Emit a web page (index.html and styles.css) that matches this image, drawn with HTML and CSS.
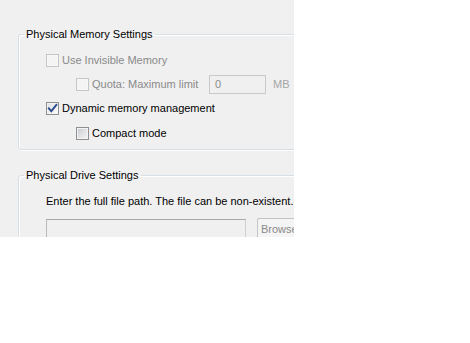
FILE: index.html
```html
<!DOCTYPE html>
<html>
<head>
<meta charset="utf-8">
<link rel="stylesheet" href="styles.css">
</head>
<body>
<div class="panel">
  <fieldset class="group group-memory">
    <legend>Physical Memory Settings</legend>
    <div class="row disabled">
      <span class="cb cb-disabled"></span>
      <span class="label">Use Invisible Memory</span>
    </div>
    <div class="row indent disabled">
      <span class="cb cb-disabled"></span>
      <span class="label quota-label">Quota: Maximum limit</span>
      <span class="num-input">0</span>
      <span class="unit">MB</span>
    </div>
    <div class="row">
      <span class="cb cb-on">
        <svg width="11" height="11" viewBox="0 0 11 11"><path d="M1.8 5.4 L4.3 8.2 L9.4 1.8" fill="none" stroke="#2d4b8e" stroke-width="1.9" stroke-linecap="square" stroke-linejoin="miter"/></svg>
      </span>
      <span class="label">Dynamic memory management</span>
    </div>
    <div class="row indent row-last">
      <span class="cb cb-on-off"></span>
      <span class="label">Compact mode</span>
    </div>
  </fieldset>
  <fieldset class="group group-drive">
    <legend>Physical Drive Settings</legend>
    <div class="hint">Enter the full file path. The file can be non-existent.</div>
    <div class="path-row">
      <span class="path-input"></span>
      <span class="browse">Browse...</span>
    </div>
  </fieldset>
</div>
</body>
</html>
```
FILE: styles.css
```css
html, body {
  margin: 0;
  padding: 0;
  background: #ffffff;
}
body {
  font-family: "Liberation Sans", Arial, sans-serif;
  font-size: 11px;
  color: #000;
}
.panel {
  width: 294px;
  height: 237px;
  background: #f0f0f0;
  overflow: hidden;
  box-sizing: border-box;
  padding: 27px 0 0 18px;
}
.group {
  margin: 0;
  width: 330px;
  box-sizing: border-box;
  border: 1px solid #d5dfe5;
  border-radius: 3px;
  box-shadow: inset 1px 1px 0 #ffffff, 1px 1px 0 #ffffff;
  padding: 7px 0 4px 27px;
  min-width: 0;
}
.group legend {
  padding: 0 2px;
  margin-left: -22px;
  line-height: 14px;
  color: #000;
}
.group-drive {
  margin-top: 18px;
  padding-top: 12px;
  padding-bottom: 20px;
}
.row {
  display: flex;
  align-items: center;
  height: 24px;
}
.row-last {
  margin-top: 1px;
}
.indent {
  padding-left: 30px;
}
.cb {
  width: 13px;
  height: 13px;
  box-sizing: border-box;
  flex: none;
  margin-right: 3px;
  display: flex;
  align-items: center;
  justify-content: center;
}
.cb-disabled {
  border: 1px solid #c6c6c6;
  background: #f4f4f4;
  box-shadow: inset 0 0 0 1px #f7f7f7;
}
.cb-on, .cb-on-off {
  border: 1px solid #8e8f8f;
  background: linear-gradient(135deg, #c4c8ce 0%, #e3e4e6 55%, #f4f4f4 100%);
  box-shadow: inset 0 0 0 1px #f4f4f4;
}
.cb-on {
  background: linear-gradient(135deg, #d9dde3 0%, #f2f2f3 60%, #fafafa 100%);
}
.cb svg {
  display: block;
}
.label {
  line-height: 14px;
  white-space: nowrap;
}
.disabled .label {
  color: #8a8a8a;
}
.quota-label {
  width: 117px;
  flex: none;
}
.num-input {
  width: 57px;
  height: 19px;
  box-sizing: border-box;
  flex: none;
  border: 1px solid #c9c9c9;
  background: #f0f0f0;
  color: #8a8a8a;
  padding-left: 5px;
  line-height: 17px;
}
.unit {
  margin-left: 7px;
  color: #a6a6a6;
}
.hint {
  line-height: 14px;
  white-space: nowrap;
}
.path-row {
  display: flex;
  align-items: flex-start;
  margin-top: 10px;
}
.path-input {
  width: 200px;
  height: 23px;
  box-sizing: border-box;
  flex: none;
  border: 1px solid #cfcfcf;
  border-top-color: #a8a8a8;
  border-left-color: #b9b9b9;
  background: #f0f0f0;
  margin-top: 1px;
}
.browse {
  margin-left: 11px;
  width: 75px;
  height: 23px;
  box-sizing: border-box;
  flex: none;
  border: 1px solid #c2c4c6;
  border-radius: 2px;
  background: #f4f4f4;
  color: #8a8a8a;
  padding-left: 3px;
  line-height: 21px;
}
```
